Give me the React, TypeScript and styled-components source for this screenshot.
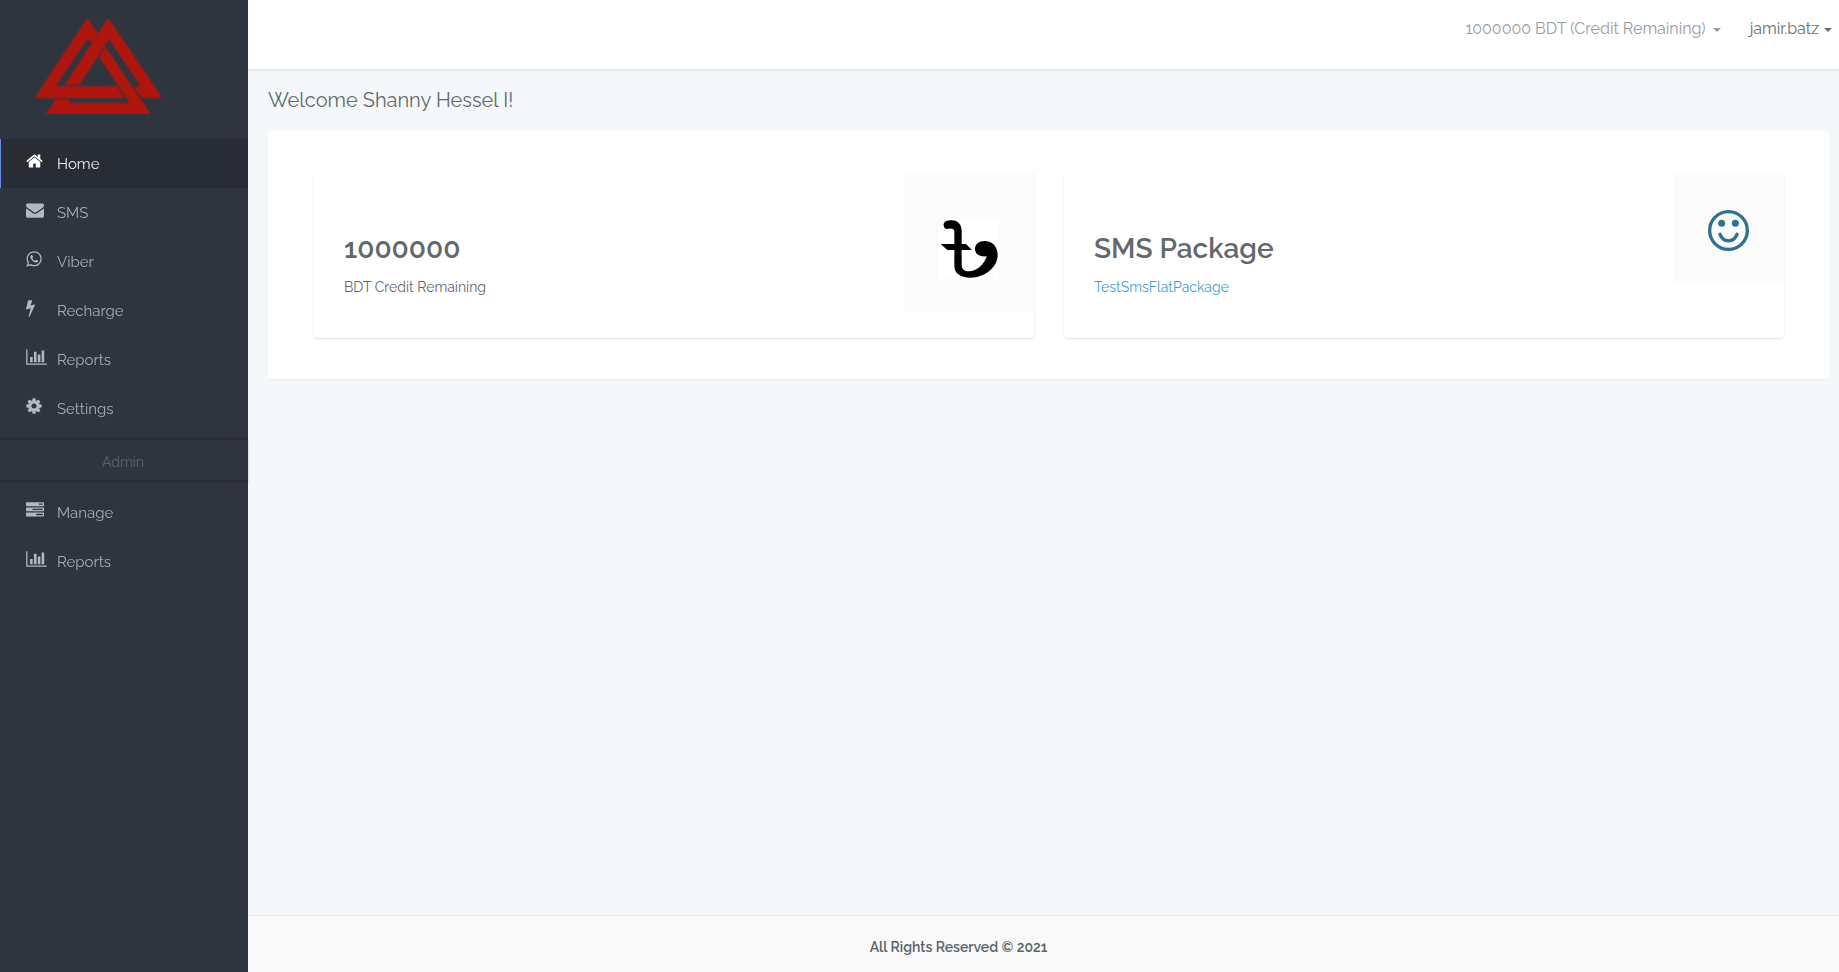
import React from 'react';
import styled, { createGlobalStyle } from 'styled-components';

const GlobalStyle = createGlobalStyle`
  *, *::before, *::after { box-sizing: border-box; }
  body {
    margin: 0;
    background: #f4f8fb;
    color: #62686c;
    font-family: Raleway, Lato, "Liberation Sans", sans-serif;
    font-size: 15px;
    line-height: 20px;
    font-variant-numeric: oldstyle-nums;
  }
  a { text-decoration: none; }
`;

const Page = styled.div`
  display: grid;
  grid-template-columns: 248px minmax(0, 1fr);
  min-height: 100vh;
`;

const Sidebar = styled.aside`
  background: #2f353f;
`;

const Brand = styled.a`
  display: block;
  height: 139px;
  padding: 19px 36px;
`;

const NavList = styled.ul`
  list-style: none;
  margin: 0;
  padding: 0;
`;

const NavLink = styled.a<{ $active?: boolean }>`
  display: flex;
  align-items: flex-start;
  height: 49px;
  padding: 13px 0 0 25px;
  border-left: 1px solid ${(p) => (p.$active ? '#6a8be0' : 'transparent')};
  background: ${(p) => (p.$active ? '#282c34' : 'transparent')};
  color: ${(p) => (p.$active ? '#ffffff' : '#b3b8bf')};
`;

const IconSlot = styled.span`
  display: flex;
  width: 31px;
  height: 18px;
`;

const NavLabel = styled.span`
  padding-top: 2px;
  font-size: 15px;
  line-height: 20px;
  opacity: 0.9;
`;

const SectionTitle = styled.h2`
  margin: 5px 0 7px;
  padding: 13px 2px 8px 0;
  border-top: 1px solid #272b32;
  border-bottom: 1px solid #272b32;
  box-shadow: 0 1px 2px rgba(0, 0, 0, 0.2), inset 0 3px 2px -2px rgba(0, 0, 0, 0.2);
  color: #5b6468;
  font-size: 14px;
  font-weight: 400;
  line-height: 20px;
  text-align: center;
`;

const Content = styled.div`
  display: flex;
  flex-direction: column;
  min-width: 0;
`;

const TopBar = styled.header`
  display: flex;
  justify-content: flex-end;
  align-items: flex-start;
  gap: 29px;
  height: 69px;
  padding: 19px 7px 0 20px;
  background: #ffffff;
  box-shadow: 0 1px 2px rgba(0, 0, 0, 0.12);
`;

const MenuButton = styled.button<{ $strong?: boolean }>`
  display: flex;
  align-items: center;
  gap: ${(p) => (p.$strong ? 5 : 7)}px;
  padding: 0;
  border: 0;
  background: none;
  color: ${(p) => (p.$strong ? '#656f74' : '#999c9e')};
  font: inherit;
  font-size: 16px;
`;

const Caret = styled.span`
  margin-top: 2px;
  border-top: 4px solid currentColor;
  border-left: 4px solid transparent;
  border-right: 4px solid transparent;
`;

const Main = styled.main`
  flex: 1;
  padding: 16px 9px 20px 20px;
`;

const Welcome = styled.h1`
  margin: 0 0 16px;
  font-size: 20px;
  font-weight: 400;
  line-height: 30px;
`;

const Panel = styled.section`
  display: grid;
  grid-template-columns: repeat(2, minmax(0, 1fr));
  gap: 30px;
  padding: 41px 46px;
  border-radius: 4px;
  background: #ffffff;
  box-shadow: 0 1px 2px rgba(0, 0, 0, 0.05);
`;

const Card = styled.article`
  display: flex;
  align-items: flex-start;
  justify-content: space-between;
  height: 166px;
  padding-left: 30px;
  overflow: hidden;
  border-radius: 4px;
  background: #ffffff;
  box-shadow: 0 1px 2px rgba(0, 0, 0, 0.13);
`;

const CardText = styled.div`
  padding-top: 59px;
`;

const Figure = styled.h2`
  margin: 0 0 10px;
  color: #62696c;
  font-size: 28px;
  font-weight: 600;
  line-height: 36px;
`;

const Caption = styled.p`
  margin: 0;
  font-size: 14px;
  line-height: 20px;
`;

const PackageLink = styled.a`
  color: #3f9fd4;
`;

const IconTile = styled.div`
  display: flex;
  background: #fbfbfb;
  color: #30718f;
  padding: 38px 35px 33px;
`;

const CurrencyTile = styled(IconTile)`
  padding-top: 47px;
`;

const Footer = styled.footer`
  padding: 21px 170px 15px 0;
  border-top: 1px solid #e5eaee;
  background: #f9f9f9;
  color: #5a646a;
  font-size: 14px;
  font-weight: 600;
  text-align: center;
`;

type Glyph = { box: string; width: number; path: string };

const glyphs: Record<string, Glyph> = {
  home: {
    box: '64 0 1664 1792',
    width: 17,
    path: 'M1472 992v480q0 26-19 45t-45 19h-384v-384h-256v384h-384q-26 0-45-19t-19-45v-480q0-1 .5-3t.5-3l575-474 575 474q1 2 1 6zm223-69l-62 74q-8 9-21 11h-3q-13 0-21-7l-692-577-692 577q-12 8-24 7-13-2-21-11l-62-74q-8-10-7-23.5t11-21.5l719-599q32-26 76-26t76 26l244 204v-195q0-14 9-23t23-9h192q14 0 23 9t9 23v408l219 182q10 8 11 21.5t-7 23.5z',
  },
  envelope: {
    box: '0 0 1792 1792',
    width: 18,
    path: 'M1792 710v794q0 66-47 113t-113 47h-1472q-66 0-113-47t-47-113v-794q44 49 101 87 362 246 497 345 57 42 92.5 65.5t94.5 48 110 24.5h2q51 0 110-24.5t94.5-48 92.5-65.5q170-123 498-345 57-39 100-87zm0-294q0 79-49 151t-122 123q-376 261-468 325-10 7-42.5 31t-54 38.5-52 32.5-57.5 27-50 9h-2q-23 0-50-9t-57.5-27-52-32.5-54-38.5-42.5-31q-91-64-262-182.5t-205-142.5q-62-42-117-115.5t-55-136.5q0-78 41.5-130t118.5-52h1472q65 0 112.5 47t47.5 113z',
  },
  whatsapp: {
    box: '128 0 1536 1792',
    width: 16,
    path: 'M1113 974q13 0 97.5 44t89.5 53q2 5 2 15 0 33-17 76-16 39-71 65.5t-102 26.5q-57 0-190-62-98-45-170-118t-148-185q-72-107-71-194v-8q3-91 74-158 24-22 52-22 6 0 18 1.5t19 1.5q19 0 26.5 6.5t15.5 27.5q8 20 33 88t25 75q0 21-34.5 57.5t-34.5 46.5q0 7 5 15 34 73 102 137 56 53 151 101 12 7 22 7 15 0 54-48.5t52-48.5zm-203 530q127 0 243.5-50t200.5-134 134-200.5 50-243.5-50-243.5-134-200.5-200.5-134-243.5-50-243.5 50-200.5 134-134 200.5-50 243.5q0 203 120 368l-79 233 242-77q158 104 345 104zm0-1382q153 0 292.5 60t240.5 161 161 240.5 60 292.5-60 292.5-161 240.5-240.5 161-292.5 60q-195 0-365-94l-417 134 136-405q-108-178-108-389 0-153 60-292.5t161-240.5 240.5-161 292.5-60z',
  },
  bolt: {
    box: '448 0 896 1792',
    width: 9,
    path: 'M1333 566q18 20 7 44l-540 1157q-13 25-42 25-4 0-14-2-17-5-25.5-19t-4.5-30l197-808-406 101q-4 1-12 1-18 0-31-11-18-15-13-39l201-825q4-14 16-23t28-9h328q19 0 32 12.5t13 29.5q0 8-5 18l-171 463 396-98q8-2 12-2 19 0 34 15z',
  },
  chart: {
    box: '0 0 2048 1792',
    width: 21,
    path: 'M640 896v512h-256v-512h256zm384-512v1024h-256v-1024h256zm1024 1152v128h-2048v-1536h128v1408h1920zm-640-896v768h-256v-768h256zm384-384v1152h-256v-1152h256z',
  },
  cog: {
    box: '128 0 1536 1792',
    width: 16,
    path: 'M1152 896q0-106-75-181t-181-75-181 75-75 181 75 181 181 75 181-75 75-181zm512-109v222q0 12-8 23t-20 13l-185 28q-19 54-39 91 35 50 107 138 10 12 10 25t-9 23q-27 37-99 108t-94 71q-12 0-26-9l-138-108q-44 23-91 38-16 136-29 186-7 28-36 28h-222q-14 0-24.5-8.5t-11.5-21.5l-28-184q-49-16-90-37l-141 107q-10 9-25 9-14 0-25-11-126-114-165-168-7-10-7-23 0-12 8-23 15-21 51-66.5t54-70.5q-27-50-41-99l-183-27q-13-2-21-12.5t-8-23.5v-222q0-12 8-23t19-13l186-28q14-46 39-92-40-57-107-138-10-12-10-24 0-10 9-23 26-36 98.5-107.5t94.5-71.5q13 0 26 10l138 107q44-23 91-38 16-136 29-186 7-28 36-28h222q14 0 24.5 8.5t11.5 21.5l28 184q49 16 90 37l142-107q9-9 24-9 13 0 25 10 129 119 165 170 7 8 7 22 0 12-8 23-15 21-51 66.5t-54 70.5q26 50 41 98l183 28q13 2 21 12.5t8 23.5z',
  },
  server: {
    box: '0 0 1792 1792',
    width: 18,
    path: 'M64 128h1664q64 0 64 64v256q0 64-64 64h-1664q-64 0-64-64v-256q0-64 64-64zM1280 256v128h384v-128zM64 640h1664q64 0 64 64v256q0 64-64 64h-1664q-64 0-64-64v-256q0-64 64-64zM640 768v128h1024v-128zM64 1152h1664q64 0 64 64v256q0 64-64 64h-1664q-64 0-64-64v-256q0-64 64-64zM1024 1280v128h640v-128z',
  },
};

function NavIcon({ name }: { name: string }) {
  const g = glyphs[name];
  return (
    <svg width={g.width} height="18" viewBox={g.box} fill="currentColor" fillRule="evenodd" aria-hidden="true">
      <path d={g.path} />
    </svg>
  );
}

function Logo() {
  return (
    <svg width="125" height="95" viewBox="108 57 375 285" role="img" aria-label="Logo">
      <filter id="logo-soften">
        <feGaussianBlur stdDeviation="2.500" />
      </filter>
      <g fill="#b01711" filter="url(#logo-soften)">
        <path d="M262 53 293 100 276 127 262 118 167 259H352L372 294H104Z" />
        <path d="M325 53 487 294H426L402 262 421 257 327 118 239 254H194Z" />
        <path d="M317 140 454 346H135L168 296H203L209 309H389L297 171Z" />
      </g>
    </svg>
  );
}

function TakaSign() {
  return (
    <svg width="60" height="60" viewBox="0 0 180 180" role="img" aria-label="Taka">
      <rect width="180" height="180" fill="#fff" />
      <path d="M14 20C12 9 23 4 38 4C57 4 68 17 68 36V75H81L99 93H68V137C68 151 77 157 90 157C114 157 137 135 143 112C120 114 108 104 108 90C108 75 120 66 137 66C160 66 176 83 176 108C176 145 137 176 94 176C65 176 46 163 46 141V93H25L5 75H46V38C46 29 38 26 22 30Q15 27 14 20Z" />
    </svg>
  );
}

function Smiley() {
  return (
    <svg width="41" height="41" viewBox="0 0 123 123" fill="none" stroke="currentColor" role="img" aria-label="Smile">
      <circle cx="61.500" cy="61.500" r="56.500" strokeWidth="10" />
      <circle cx="41" cy="40" r="10.500" fill="currentColor" stroke="none" />
      <circle cx="82" cy="40" r="10.500" fill="currentColor" stroke="none" />
      <path d="M36 73C46 99 77 99 87 73" strokeWidth="10" strokeLinecap="round" />
    </svg>
  );
}

type NavItem = { label: string; icon: string; active?: boolean };

const mainItems: NavItem[] = [
  { label: 'Home', icon: 'home', active: true },
  { label: 'SMS', icon: 'envelope' },
  { label: 'Viber', icon: 'whatsapp' },
  { label: 'Recharge', icon: 'bolt' },
  { label: 'Reports', icon: 'chart' },
  { label: 'Settings', icon: 'cog' },
];

const adminItems: NavItem[] = [
  { label: 'Manage', icon: 'server' },
  { label: 'Reports', icon: 'chart' },
];

function NavGroup({ items }: { items: NavItem[] }) {
  return (
    <NavList>
      {items.map((item) => (
        <li key={item.label}>
          <NavLink href="#" $active={item.active} aria-current={item.active ? 'page' : undefined}>
            <IconSlot>
              <NavIcon name={item.icon} />
            </IconSlot>
            <NavLabel>{item.label}</NavLabel>
          </NavLink>
        </li>
      ))}
    </NavList>
  );
}

export default function App() {
  return (
    <Page>
      <GlobalStyle />
      <Sidebar>
        <Brand href="#">
          <Logo />
        </Brand>
        <nav>
          <NavGroup items={mainItems} />
          <SectionTitle>Admin</SectionTitle>
          <NavGroup items={adminItems} />
        </nav>
      </Sidebar>
      <Content>
        <TopBar>
          <MenuButton type="button">
            1000000 BDT (Credit Remaining)
            <Caret />
          </MenuButton>
          <MenuButton type="button" $strong>
            jamir.batz
            <Caret />
          </MenuButton>
        </TopBar>
        <Main>
          <Welcome>Welcome Shanny Hessel I!</Welcome>
          <Panel>
            <Card>
              <CardText>
                <Figure>1000000</Figure>
                <Caption>BDT Credit Remaining</Caption>
              </CardText>
              <CurrencyTile>
                <TakaSign />
              </CurrencyTile>
            </Card>
            <Card>
              <CardText>
                <Figure>SMS Package</Figure>
                <Caption>
                  <PackageLink href="#">TestSmsFlatPackage</PackageLink>
                </Caption>
              </CardText>
              <IconTile>
                <Smiley />
              </IconTile>
            </Card>
          </Panel>
        </Main>
        <Footer>All Rights Reserved © 2021</Footer>
      </Content>
    </Page>
  );
}
